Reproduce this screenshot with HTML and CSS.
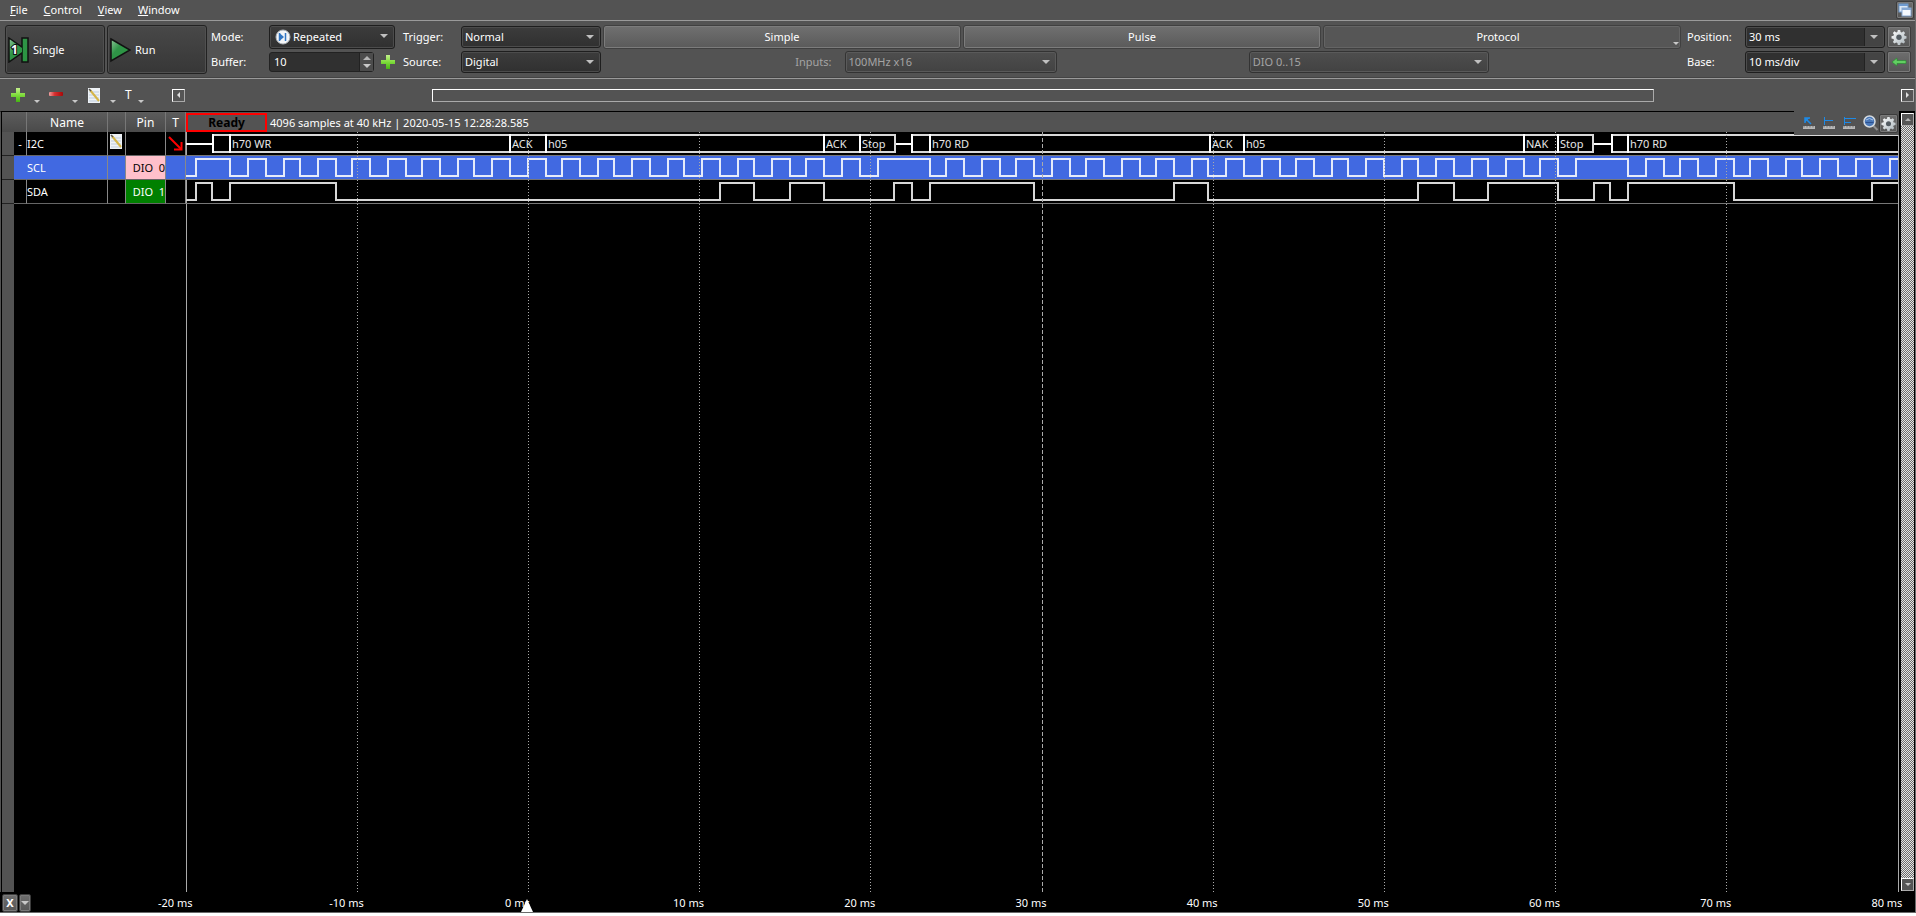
FILE: index.html
```html
<!DOCTYPE html>
<html lang="en">
<head>
<meta charset="utf-8">
<title>Logic Analyzer</title>
<link rel="stylesheet" href="styles.css">
</head>
<body>
<svg class="sprite" aria-hidden="true">
  <defs>
    <linearGradient id="green" x1="0" y1="0" x2="0" y2="1"><stop offset="0" stop-color="#c4f08c"/><stop offset="0.5" stop-color="#7fdc3c"/><stop offset="1" stop-color="#45b414"/></linearGradient>
    <linearGradient id="red" x1="0" y1="0" x2="1" y2="0"><stop offset="0" stop-color="#f0a0a0"/><stop offset="0.4" stop-color="#d83030"/><stop offset="1" stop-color="#a80808"/></linearGradient>
    <linearGradient id="play" x1="0" y1="0" x2="1" y2="1"><stop offset="0" stop-color="#8fc79a"/><stop offset="0.4" stop-color="#2f9447"/><stop offset="1" stop-color="#2a9440"/></linearGradient>
    <linearGradient id="gearfill" x1="0" y1="0" x2="1" y2="1"><stop offset="0" stop-color="#ffffff"/><stop offset="1" stop-color="#a9b4ba"/></linearGradient>
    <symbol id="i-plus" viewBox="0 0 14 14"><path d="M5 0h4v5h5v4H9v5H5V9H0V5h5z" fill="url(#green)"/></symbol>
    <symbol id="i-note" viewBox="0 0 13 15"><rect x="0" y="0" width="12" height="15" fill="#eef2f6"/><path d="M1 4h10M1 7h10M1 10h10M1 13h10" stroke="#bfcddd"/><path d="M2 2l9 11" stroke="#d5b548" stroke-width="2"/><path d="M1 1l2 2" stroke="#555" stroke-width="1.5"/></symbol>
    <symbol id="i-gear" viewBox="0 0 16 16"><path d="M6.8 1h2.4l.4 2 1.2.5 1.7-1.2 1.6 1.6-1.1 1.8.5 1.1 2 .4v2.3l-2 .5-.5 1.2 1.1 1.7-1.6 1.6-1.7-1.1-1.2.5-.4 2H6.8l-.4-2-1.2-.5-1.7 1.1-1.6-1.6L3 11.2 2.500 10l-2-.5V7.200l2-.4L3 5.700 1.900 3.900l1.600-1.600 1.700 1.200L6.400 3z" fill="url(#gearfill)"/><circle cx="8" cy="8.300" r="2.700" fill="#545c62"/></symbol>
  </defs>
</svg>

<main class="app">
  <nav class="menubar">
    <button class="menu"><u>F</u>ile</button>
    <button class="menu"><u>C</u>ontrol</button>
    <button class="menu"><u>V</u>iew</button>
    <button class="menu"><u>W</u>indow</button>
    <button class="iconbtn cascade" aria-label="Cascade windows">
      <svg width="14" height="14" viewBox="0 0 14 14"><rect x="1" y="1" width="9" height="8" fill="#dbe7f5" stroke="#6f9bd0"/><path d="M1 2h9" stroke="#6f9bd0" stroke-width="2"/><rect x="4" y="5" width="9" height="8" fill="#f4f8fd" stroke="#87a9d4"/><path d="M4 6h9" stroke="#87a9d4" stroke-width="2"/></svg>
    </button>
  </nav>

  <section class="controls">
    <button class="big">
      <svg width="21" height="26" viewBox="0 0 21 26"><path d="M1 1l13 9V1h6v24h-6v-9L1 25z" fill="url(#play)" stroke="#111" stroke-width="1.500"/><path d="M14.500 2v22" stroke="#12331a"/><text x="3" y="17" class="one">1</text></svg>
      <span>Single</span>
    </button>
    <button class="big">
      <svg width="21" height="26" viewBox="0 0 21 26"><path d="M1 2l19 11L1 24z" fill="url(#play)" stroke="#111" stroke-width="1.500"/></svg>
      <span>Run</span>
    </button>

    <div class="form mode">
      <label for="mode">Mode:</label>
      <span class="select tall">
        <svg class="lead" width="16" height="16" viewBox="0 0 16 16"><circle cx="8" cy="8" r="7" fill="#f4f6f8" stroke="#aeb4ba"/><path d="M5 4.500L9 8l-4 3.500z" fill="#3276c2"/><path d="M4.500 4v8M10.500 4v8" stroke="#3276c2" stroke-width="1.500"/></svg>
        <select id="mode"><option>Repeated</option></select>
      </span>
      <label for="buffer">Buffer:</label>
      <span class="bufferline">
        <span class="spin"><input id="buffer" type="text" value="10"><span class="steps"><button aria-label="Increase"><i class="up"></i></button><button aria-label="Decrease"><i class="down"></i></button></span></span>
        <button class="plain" aria-label="Add buffer"><svg width="14" height="14"><use href="#i-plus"/></svg></button>
      </span>
    </div>

    <div class="form trigger">
      <label for="trigger">Trigger:</label>
      <span class="select"><select id="trigger"><option>Normal</option></select></span>
      <label for="source">Source:</label>
      <span class="select"><select id="source"><option>Digital</option></select></span>
    </div>

    <div class="trigtype">
      <div class="tabs">
        <button class="tab">Simple</button>
        <button class="tab">Pulse</button>
        <button class="tab flat">Protocol<i class="down corner"></i></button>
      </div>
      <div class="inputs">
        <span class="pair"><label for="inputs">Inputs:</label><span class="select off wide"><select id="inputs" disabled><option>100MHz x16</option></select></span></span>
        <span class="select off wider"><select aria-label="Digital lines" disabled><option>DIO 0..15</option></select></span>
      </div>
    </div>

    <div class="form timebase">
      <label for="position">Position:</label>
      <span class="select split"><select id="position"><option>30 ms</option></select></span>
      <button class="iconbtn" aria-label="Time settings"><svg width="16" height="16"><use href="#i-gear"/></svg></button>
      <label for="base">Base:</label>
      <span class="select split"><select id="base"><option>10 ms/div</option></select></span>
      <button class="iconbtn" aria-label="Back"><svg width="16" height="10" viewBox="0 0 16 10"><path d="M1 5l5-4v2.500h9v3H6V9z" fill="#62cf62" stroke="#2d8a35" stroke-width="0.700"/></svg></button>
    </div>
  </section>

  <section class="tools">
    <button class="tool" aria-label="Add channel"><svg width="14" height="14"><use href="#i-plus"/></svg><i class="down"></i></button>
    <button class="tool" aria-label="Remove channel"><svg width="14" height="14" viewBox="0 0 14 14"><rect y="4" width="14" height="4" rx="1" fill="url(#red)"/></svg><i class="down"></i></button>
    <button class="tool" aria-label="Edit channel"><svg width="14" height="15" viewBox="0 0 14 15"><use href="#i-note" x="1" width="13" height="15"/></svg><i class="down"></i></button>
    <button class="tool letter">T<i class="down"></i></button>
    <div class="scroller">
      <button class="arrowbtn" aria-label="Scroll left"><i class="left"></i></button>
      <div class="track"><div class="thumb"></div></div>
      <button class="arrowbtn" aria-label="Scroll right"><i class="right"></i></button>
    </div>
  </section>

  <section class="view">
    <div class="channels">
      <table>
        <colgroup><col class="c-head"><col class="c-tree"><col class="c-name"><col class="c-edit"><col class="c-pin"><col class="c-trig"></colgroup>
        <thead><tr><th colspan="2"></th><th>Name</th><th></th><th>Pin</th><th>T</th></tr></thead>
        <tbody>
          <tr><td class="rowhead"></td><td class="tree">-</td><td>I2C</td><td class="edit"><svg width="13" height="15"><use href="#i-note"/></svg></td><td></td><td class="edge"><svg width="16" height="16" viewBox="0 0 16 16"><path d="M1 1l12 12" fill="none" stroke="#f00" stroke-width="2"/><path d="M6 13.500h7.500V6" fill="none" stroke="#f00" stroke-width="2"/></svg></td></tr>
          <tr class="selected"><td class="rowhead"></td><td class="tree"></td><td>SCL</td><td></td><td class="pin pink">DIO  0</td><td></td></tr>
          <tr><td class="rowhead"></td><td class="tree"></td><td>SDA</td><td></td><td class="pin green">DIO  1</td><td></td></tr>
        </tbody>
      </table>
      <div class="gutter"></div>
    </div>

    <div class="plot">
      <div class="status"><strong class="ready">Ready</strong><span>4096 samples at 40 kHz | 2020-05-15 12:28:28.585</span></div>
      <div class="canvas">
        <div class="lane bus">
          <span class="idle" style="flex-grow:26"></span>
          <span class="seg" style="flex-grow:17"></span>
          <span class="seg" style="flex-grow:280">h70 WR</span>
          <span class="seg" style="flex-grow:36">ACK</span>
          <span class="seg" style="flex-grow:278">h05</span>
          <span class="seg" style="flex-grow:36">ACK</span>
          <span class="seg end" style="flex-grow:37">Stop</span>
          <span class="idle" style="flex-grow:15"></span>
          <span class="seg" style="flex-grow:18"></span>
          <span class="seg" style="flex-grow:280">h70 RD</span>
          <span class="seg" style="flex-grow:34">ACK</span>
          <span class="seg" style="flex-grow:280">h05</span>
          <span class="seg" style="flex-grow:34">NAK</span>
          <span class="seg end" style="flex-grow:37">Stop</span>
          <span class="idle" style="flex-grow:17"></span>
          <span class="seg" style="flex-grow:16"></span>
          <span class="seg" style="flex-grow:271">h70 RD</span>
        </div>
        <svg class="lane clock" viewBox="186 0 1712 23" preserveAspectRatio="none">
          <path d="M186 20H196V3H230V20H248V3H266V20H284V3H300V20H318V3H336V20H352V3H370V20H388V3H406V20H422V3H440V20H458V3H474V20H492V3H510V20H528V3H546V20H562V3H580V20H598V3H614V20H632V3H650V20H668V3H684V20H702V3H720V20H738V3H754V20H772V3H790V20H806V3H824V20H842V3H860V20H878V3H930V20H946V3H964V20H982V3H1000V20H1016V3H1034V20H1052V3H1070V20H1086V3H1104V20H1122V3H1140V20H1156V3H1174V20H1192V3H1208V20H1226V3H1244V20H1262V3H1280V20H1296V3H1314V20H1332V3H1348V20H1366V3H1384V20H1402V3H1418V20H1436V3H1454V20H1472V3H1488V20H1506V3H1524V20H1540V3H1558V20H1576V3H1628V20H1646V3H1664V20H1680V3H1698V20H1716V3H1734V20H1750V3H1768V20H1786V3H1802V20H1820V3H1838V20H1856V3H1872V20H1890V3H1898"/>
        </svg>
        <svg class="lane data" viewBox="186 0 1712 23" preserveAspectRatio="none">
          <path d="M186 20H196V3H212V20H230V3H336V20H720V3H754V20H790V3H824V20H894V3H912V20H930V3H1034V20H1174V3H1208V20H1418V3H1454V20H1488V3H1558V20H1594V3H1610V20H1628V3H1734V20H1872V3H1898"/>
        </svg>
        <svg class="grid">
          <line x1="10%" x2="10%" y2="100%"/><line x1="20%" x2="20%" y2="100%"/><line x1="30%" x2="30%" y2="100%"/><line x1="40%" x2="40%" y2="100%"/><line class="center" x1="50%" x2="50%" y2="100%"/><line x1="60%" x2="60%" y2="100%"/><line x1="70%" x2="70%" y2="100%"/><line x1="80%" x2="80%" y2="100%"/><line x1="90%" x2="90%" y2="100%"/>
        </svg>
      </div>
      <div class="quick">
        <button class="plain measure" aria-label="Cursor"><svg width="13" height="13" viewBox="0 0 13 13"><path d="M8 7L3 2M2 6V1h5" fill="none" stroke="#1e8ae6" stroke-width="1.500"/><path d="M2 1h4.500L2 5.500z" fill="#1e8ae6"/><path d="M0 9h12v3H0z" fill="#b8b8b8"/><path d="M1 9v1.500M4 9v1.500M7 9v1.500M10 9v1.500" stroke="#777"/></svg></button>
        <button class="plain measure" aria-label="Pulse measurement"><svg width="13" height="13" viewBox="0 0 13 13"><path d="M1.500 0v8M1 3.500h9" fill="none" stroke="#1e8ae6"/><path d="M0 9h12v3H0z" fill="#b8b8b8"/><path d="M1 9v1.500M4 9v1.500M7 9v1.500M10 9v1.500" stroke="#777"/></svg></button>
        <button class="plain measure" aria-label="Period measurement"><svg width="13" height="13" viewBox="0 0 13 13"><path d="M1.500 0v8M1 1.500h12M1 5.500h7" fill="none" stroke="#1e8ae6"/><path d="M0 9h12v3H0z" fill="#b8b8b8"/><path d="M1 9v1.500M4 9v1.500M7 9v1.500M10 9v1.500" stroke="#777"/></svg></button>
        <button class="plain" aria-label="Zoom"><svg width="16" height="16" viewBox="0 0 16 16"><path d="M10.500 11l4 4" stroke="#8f8f8f" stroke-width="2"/><circle cx="6.500" cy="6.500" r="5.500" fill="#4a78b8" stroke="#d4dae0" stroke-width="1.500"/><path d="M3 5q3.500-3 7 0" fill="none" stroke="#a9c4e8"/><path d="M2.500 7.500h8" stroke="#2c5190"/></svg></button>
        <button class="iconbtn" aria-label="View settings"><svg width="15" height="15"><use href="#i-gear"/></svg></button>
      </div>
    </div>

    <div class="vscroll">
      <button class="arrowbtn" aria-label="Scroll up"><i class="up"></i></button>
      <div class="vtrack"></div>
      <button class="arrowbtn" aria-label="Scroll down"><i class="down"></i></button>
    </div>
  </section>

  <footer class="axis">
    <button class="iconbtn x">X</button>
    <button class="iconbtn pick" aria-label="Axis options"><i class="down"></i></button>
    <ol class="ticks">
      <li>-20 ms</li><li>-10 ms</li><li>0 ms<i class="marker"></i></li><li>10 ms</li><li>20 ms</li><li>30 ms</li><li>40 ms</li><li>50 ms</li><li>60 ms</li><li>70 ms</li><li>80 ms</li>
    </ol>
  </footer>
</main>
</body>
</html>
```
FILE: styles.css
```css
* { box-sizing: border-box; }
body { margin: 0; background: #fff; color: #fff; font: 11px/16px "Noto Sans", "DejaVu Sans", sans-serif; }
button, select, input { margin: 0; padding: 0; font: inherit; color: inherit; border: 0; background: none; border-radius: 0; }
svg { display: block; flex: none; }
.sprite { position: absolute; width: 0; height: 0; }

.app { display: flex; flex-direction: column; height: calc(100vh - 3px); background: #535353; border-right: 1px solid #6a6a6a; border-bottom: 1px solid #6a6a6a; }

/* arrows */
i { display: block; flex: none; width: 0; height: 0; border: 0 solid transparent; }
.up { border-width: 0 4px 4px; border-bottom-color: #b4b4b4; }
.down { border-width: 4px 4px 0; border-top-color: #c8c8c8; }
.left { border-width: 3px 3px 3px 0; border-right-color: #ddd; }
.right { border-width: 3px 0 3px 3px; border-left-color: #ddd; }

.iconbtn { display: flex; align-items: center; justify-content: center; background: linear-gradient(#6e6e6e, #565656); border: 1px solid #3c3c3c; border-radius: 2px; box-shadow: inset 0 0 0 1px #7a7a7a; }
.plain { display: flex; align-items: center; justify-content: center; }

/* menu bar */
.menubar { display: flex; align-items: center; gap: 16px; height: 21px; padding: 0 1px 1px 10px; border-bottom: 1px solid #9a9a9a; }
.cascade { width: 18px; height: 18px; margin-left: auto; }

/* controls */
.controls { display: flex; gap: 2px; height: 58px; padding: 4px 4px 3px 5px; border-bottom: 1px solid #9a9a9a; box-shadow: inset 0 -1px #444; }
.big { display: flex; align-items: center; gap: 4px; width: 100px; height: 49px; padding-left: 2px; background: linear-gradient(#484848, #373737); border: 1px solid #222; border-radius: 3px; box-shadow: inset 0 0 0 1px #505050; }
.one { font: bold 12px "Noto Sans", sans-serif; fill: #fff; stroke: #111; stroke-width: 2px; paint-order: stroke; }
.form { display: grid; grid-template-rows: 24px 22px; row-gap: 2px; align-items: center; height: 49px; }
.mode { grid-template-columns: 58px 126px; margin-left: 2px; }
.trigger { grid-template-columns: 58px 140px; margin-left: 6px; }
.timebase { grid-template-columns: 58px 140px 26px; margin-left: 4px; }
.timebase .iconbtn { height: 22px; margin-left: 2px; }
.select { position: relative; display: block; height: 22px; }
.select.tall { height: 24px; }
.select::after { content: ""; position: absolute; right: 7px; top: 9px; border: 4px solid transparent; border-bottom-width: 0; border-top-color: #c0c0c0; pointer-events: none; }
.select select { appearance: none; display: block; width: 100%; height: 100%; padding: 0 20px 0 3px; background: linear-gradient(#3c3c3c, #303030); border: 1px solid #1e1e1e; border-radius: 3px; box-shadow: inset 0 0 0 1px #4c4c4c; }
.lead { position: absolute; left: 6px; top: 4px; }
.select.tall select { padding-left: 23px; }
.select.split select { background: linear-gradient(90deg, #303030 calc(100% - 20px), #222 calc(100% - 20px) calc(100% - 19px), #444 0); }
.bufferline { display: flex; justify-content: space-between; align-items: center; }
.spin { display: flex; width: 105px; height: 20px; background: #303030; border: 1px solid #222; border-radius: 3px; }
.spin input { flex: 1; min-width: 0; padding-left: 4px; }
.steps { display: flex; flex-direction: column; justify-content: space-evenly; width: 14px; background: #4c4c4c; border-left: 1px solid #222; }
.steps button { display: flex; justify-content: center; }

.trigtype { flex: 1; display: flex; flex-direction: column; gap: 2px; }
.tabs { display: grid; grid-template-columns: repeat(3, 1fr); gap: 2px; }
.tab { position: relative; height: 24px; background: linear-gradient(#707070, #5a5a5a); border: 1px solid #404040; border-radius: 3px; box-shadow: inset 0 0 0 1px #7c7c7c; }
.tab.flat { padding-right: 8px; background: #565656; box-shadow: inset 0 0 0 1px #646464; }
.corner { position: absolute; right: 1px; bottom: 3px; border-width: 3px 3px 0; }
.inputs { display: flex; justify-content: space-evenly; align-items: center; color: #a4a4a4; }
.pair { display: flex; align-items: center; gap: 13px; }
.off select { background: linear-gradient(#4e4e4e, #424242); border-color: #333; box-shadow: inset 0 0 0 1px #5a5a5a; opacity: 1; color: #a4a4a4; }
.wide { width: 212px; }
.wider { width: 240px; }

/* tools */
.tools { display: flex; align-items: center; height: 32px; padding: 0 1px 0 11px; }
.tool { display: flex; align-items: center; gap: 9px; width: 38px; height: 16px; }
.tool .down { align-self: flex-end; border-width: 3px 3px 0; }
.letter { width: 47px; gap: 6px; font-size: 12px; }
.scroller { flex: 1; display: flex; align-items: center; }
.arrowbtn { display: flex; align-items: center; justify-content: center; flex: none; width: 13px; height: 13px; background: #555; border: 1px solid #fff; border-right-color: #aaa; border-bottom-color: #aaa; }
.arrowbtn .up { border-width: 0 3px 3px; }
.arrowbtn .down { border-width: 3px 3px 0; }
.track { flex: 1; }
.thumb { width: 71.2%; height: 13px; margin-left: 14.4%; border: 1px solid #fff; border-right-color: #aaa; border-bottom-color: #aaa; }

/* view */
.view { flex: 1; min-height: 0; display: flex; background: #000; border-top: 1px solid #000; border-left: 1px solid #535353; padding-left: 1px; }
.channels { display: flex; flex-direction: column; width: 184px; }
table { width: 184px; table-layout: fixed; border-collapse: separate; border-spacing: 0; }
.c-head { width: 12px; }
.c-tree { width: 13px; }
.c-name { width: 81px; }
.c-edit { width: 18px; }
.c-pin { width: 40px; }
.c-trig { width: 20px; }
th, td { padding: 0; }
th { height: 20px; padding-top: 2px; font-weight: 400; font-size: 12px; background: linear-gradient(#5c5c5c, #4a4a4a); border-right: 1px solid #777; }
td { height: 24px; border-bottom: 1px solid #666; border-right: 1px solid #888; }
td.rowhead { background: #535353; border-right: 0; border-bottom-color: #222; }
td.tree { text-align: center; }
.selected td { background: #4169e1; }
.selected td.tree { border-right-color: #4169e1; }
.selected td.rowhead { background: #535353; }
.edge svg { margin-left: 2px; }
.edit svg { margin: 0 0 5px 2px; }
.pin, .selected .pin { text-align: right; white-space: pre; }
.selected .pink { background: #ffc0cb; color: #000; }
.green { background: #008000; }
.gutter { flex: 1; width: 12px; background: #535353; }

.plot { position: relative; flex: 1; min-width: 0; display: flex; flex-direction: column; }
.status { display: flex; align-items: center; gap: 3px; height: 20px; padding-top: 1px; background: #535353; }
.ready { width: 81px; border: 2px solid #f00; color: #000; font-size: 12px; line-height: 15px; text-align: center; }
.canvas { position: relative; flex: 1; border-right: 1px solid #aaa; box-shadow: inset 1px 0 #aaa; }
.lane { width: 100%; height: 24px; border-bottom: 1px solid #777; }
.lane path { fill: none; stroke: #d8d8d8; stroke-width: 2px; vector-effect: non-scaling-stroke; }
.clock { background: #4169e1; }
.clock path { stroke: #e6ebfa; }
.bus { display: flex; padding: 2px 0; color: #e6e6e6; }
.idle, .seg { flex: 1 1 0; min-width: 0; white-space: nowrap; }
.idle { align-self: center; height: 2px; background: #fff; }
.seg { height: 19px; line-height: 20px; text-indent: 3px; box-shadow: inset 2px 0 #fff, inset 0 2px #d8d8d8, inset 0 -2px #d8d8d8; }
.seg.end { box-shadow: inset 2px 0 #fff, inset -2px 0 #d8d8d8, inset 0 2px #d8d8d8, inset 0 -2px #d8d8d8; }
.grid { position: absolute; left: 0; top: 0; width: 100%; height: 100%; }
.grid line { stroke: #aaa; stroke-dasharray: 1 2; shape-rendering: crispEdges; }
.grid .center { stroke-dasharray: 4 2; }
.quick { position: absolute; right: 0; top: -1px; display: flex; align-items: center; width: 105px; height: 24px; padding: 0 1px 0 9px; background: #535353; }
.quick .measure { margin-right: 7px; }
.quick .iconbtn { width: 19px; height: 19px; margin-left: auto; }

.vscroll { display: flex; flex-direction: column; width: 16px; padding: 1px 1px 1px 2px; }
.vtrack { flex: 1; background: repeating-conic-gradient(#e4e4e4 0 25%, #6e6e6e 0 50%) 0 0 / 2px 2px; }

/* time axis */
.axis { display: flex; align-items: center; height: 20px; padding: 2px 11px 0 2px; background: #000; }
.x { width: 16px; height: 18px; font-weight: 700; }
.pick { width: 12px; height: 18px; margin-left: 1px; }
.ticks { flex: 1; display: flex; justify-content: space-between; margin: 0 0 0 127px; padding: 0; list-style: none; }
.ticks li { position: relative; width: 34px; text-align: center; white-space: nowrap; }
.marker { position: absolute; right: 1px; bottom: -1px; border-width: 0 6px 13px; border-bottom-color: #fff; }
```
